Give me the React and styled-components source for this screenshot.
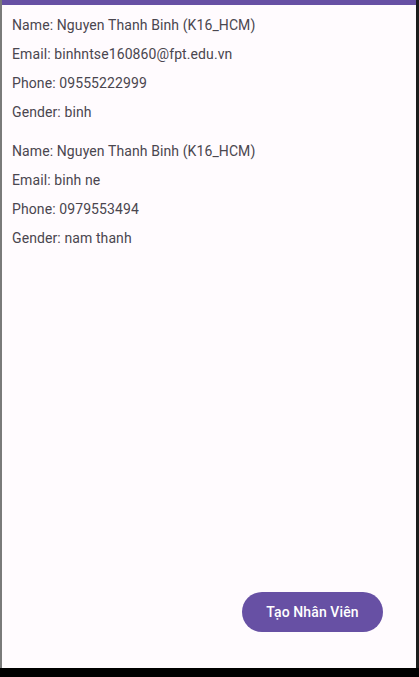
import React from "react";
import styled, { createGlobalStyle } from "styled-components";

const Global = createGlobalStyle`
  html, body { margin: 0; padding: 0; background: #000; }
  body { font-family: Roboto, "Noto Sans", "Liberation Sans", sans-serif; }
  * { box-sizing: border-box; }
`;

const Frame = styled.div`
  width: 419px;
  height: 677px;
  display: flex;
  flex-direction: column;
  background: #000;
  overflow: hidden;
`;

const Row = styled.div`
  flex: 0 0 668px;
  display: flex;
`;

const Edge = styled.div`
  flex: 0 0 ${(p) => p.$w}px;
  background: ${(p) => p.$c};
`;

const Screen = styled.div`
  flex: 1;
  display: flex;
  flex-direction: column;
  background: #fffbfe;
`;

const StatusBar = styled.div`
  height: 5px;
  background: #6750a4;
`;

const List = styled.div`
  flex: 1;
  display: flex;
  flex-direction: column;
  gap: 18px;
  padding: 10px 0 0 10px;
`;

const Card = styled.div`
  display: flex;
  flex-direction: column;
  gap: 8px;
`;

const Line = styled.div`
  font-size: 14px;
  line-height: 21px;
  color: #4a464f;
  letter-spacing: 0.1px;
`;

const Footer = styled.div`
  display: flex;
  justify-content: flex-end;
  padding: 0 33px 36px 0;
`;

const Fab = styled.button`
  width: 141px;
  height: 40px;
  border: none;
  border-radius: 20px;
  background: #6750a4;
  color: #fff;
  font-family: Roboto, "Noto Sans", sans-serif;
  font-weight: 500;
  font-size: 14px;
  letter-spacing: 0.1px;
  cursor: pointer;
`;

const employees = [
  {
    name: "Nguyen Thanh Binh (K16_HCM)",
    email: "binhntse160860@fpt.edu.vn",
    phone: "09555222999",
    gender: "binh",
  },
  {
    name: "Nguyen Thanh Binh (K16_HCM)",
    email: "binh ne",
    phone: "0979553494",
    gender: "nam thanh",
  },
];

export default function App() {
  return (
    <>
      <Global />
      <Frame>
        <Row>
          <Edge $w={2} $c="#7a7a7a" />
          <Screen>
            <StatusBar />
            <List>
              {employees.map((e, i) => (
                <Card key={i}>
                  <Line>Name: {e.name}</Line>
                  <Line>Email: {e.email}</Line>
                  <Line>Phone: {e.phone}</Line>
                  <Line>Gender: {e.gender}</Line>
                </Card>
              ))}
            </List>
            <Footer>
              <Fab>Tạo Nhân Viên</Fab>
            </Footer>
          </Screen>
          <Edge $w={3} $c="#1c1c1c" />
        </Row>
      </Frame>
    </>
  );
}
